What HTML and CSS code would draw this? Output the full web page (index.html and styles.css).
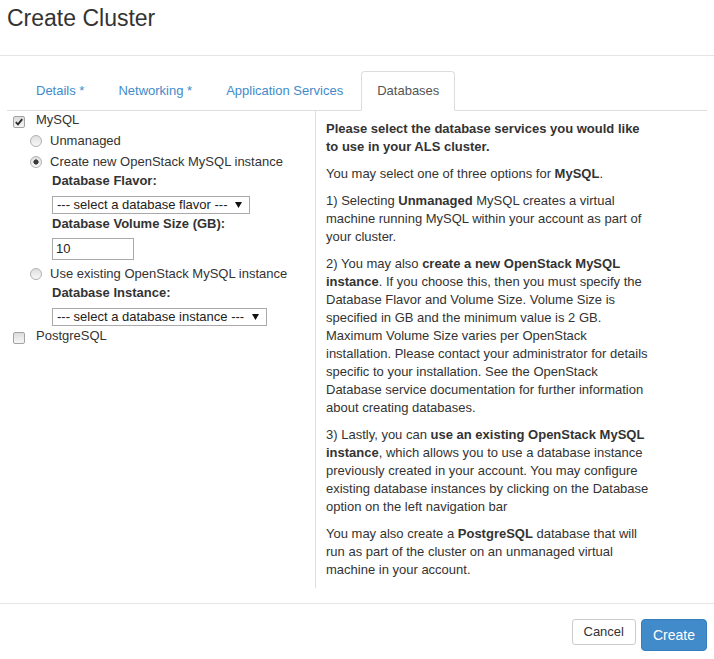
FILE: index.html
```html
<!DOCTYPE html>
<html lang="en">
<head>
<meta charset="utf-8">
<title>Create Cluster</title>
<link rel="stylesheet" href="styles.css">
</head>
<body>
<div class="modal">
  <div class="modal-header">
    <h3 class="modal-title">Create Cluster</h3>
  </div>
  <div class="modal-body">
    <ul class="nav-tabs">
      <li><a>Details *</a></li>
      <li><a>Networking *</a></li>
      <li><a>Application Services</a></li>
      <li class="active"><a>Databases</a></li>
    </ul>
    <div class="tab-content">
      <div class="col-left">
        <div class="row-check row-mysql">
          <span class="checkbox"><svg width="10" height="10" viewBox="0 0 10 10"><path d="M1.8 5.2 L4 7.4 L8.2 2.2" fill="none" stroke="#2b2b2b" stroke-width="1.9"/></svg></span>
          <span>MySQL</span>
        </div>
        <div class="row-radio first">
          <span class="radio"></span><span>Unmanaged</span>
        </div>
        <div class="row-radio">
          <span class="radio checked"></span><span>Create new OpenStack MySQL instance</span>
        </div>
        <div class="sub-label">Database Flavor:</div>
        <div class="select select-flavor"><span>--- select a database flavor ---</span><svg width="7" height="6" viewBox="0 0 7 6"><polygon points="0,0 7,0 3.5,6" fill="#111"/></svg></div>
        <div class="sub-label">Database Volume Size (GB):</div>
        <div class="text-input">10</div>
        <div class="row-radio existing">
          <span class="radio"></span><span>Use existing OpenStack MySQL instance</span>
        </div>
        <div class="sub-label">Database Instance:</div>
        <div class="select select-instance"><span>--- select a database instance ---</span><svg width="7" height="6" viewBox="0 0 7 6"><polygon points="0,0 7,0 3.5,6" fill="#111"/></svg></div>
        <div class="row-check row-pg">
          <span class="checkbox"></span>
          <span>PostgreSQL</span>
        </div>
      </div>
      <div class="col-right">
        <p><b>Please select the database services you would like to use in your ALS cluster.</b></p>
        <p>You may select one of three options for <b>MySQL</b>.</p>
        <p>1) Selecting <b>Unmanaged</b> MySQL creates a virtual machine running MySQL within your account as part of your cluster.</p>
        <p>2) You may also <b>create a new OpenStack MySQL instance</b>. If you choose this, then you must specify the Database Flavor and Volume Size. Volume Size is specified in GB and the minimum value is 2 GB. Maximum Volume Size varies per OpenStack installation. Please contact your administrator for details specific to your installation. See the OpenStack Database service documentation for further information about creating databases.</p>
        <p>3) Lastly, you can <b>use an existing OpenStack MySQL instance</b>, which allows you to use a database instance previously created in your account. You may configure existing database instances by clicking on the Database option on the left navigation bar</p>
        <p>You may also create a <b>PostgreSQL</b> database that will run as part of the cluster on an unmanaged virtual machine in your account.</p>
      </div>
    </div>
  </div>
  <div class="modal-footer">
    <button class="btn btn-default">Cancel</button>
    <button class="btn btn-primary">Create</button>
  </div>
</div>
</body>
</html>
```
FILE: styles.css
```css
* { box-sizing: border-box; }

body {
  margin: 0;
  font-family: "Liberation Sans", Arial, sans-serif;
  font-size: 13px;
  line-height: 18px;
  color: #333;
  background: #fff;
}

.modal-header {
  padding: 5px 7px 24px;
  border-bottom: 1px solid #e5e5e5;
}

.modal-title {
  margin: 0;
  font-size: 23px;
  font-weight: normal;
  line-height: 26px;
  color: #333;
}

.modal-body {
  padding: 15px 7px;
}

.nav-tabs {
  list-style: none;
  margin: 0;
  padding: 0 0 0 13px;
  display: flex;
  border-bottom: 1px solid #ddd;
}

.nav-tabs li {
  margin: 0 2px -1px 0;
}

.nav-tabs a {
  display: block;
  padding: 10px 15px;
  border: 1px solid transparent;
  border-radius: 4px 4px 0 0;
  color: #428bca;
  line-height: 18px;
  cursor: pointer;
}

.nav-tabs .active a {
  color: #555;
  background: #fff;
  border-color: #ddd #ddd transparent;
}

.tab-content {
  display: flex;
  align-items: stretch;
}

.col-left {
  width: 309px;
  border-right: 1px solid #ddd;
  padding-left: 6px;
  display: flex;
  flex-direction: column;
  align-items: flex-start;
}

.col-right {
  width: 347px;
  padding: 9px 10px 0;
}

.col-right p {
  margin: 0 0 9px;
}

.row-check {
  display: flex;
  align-items: flex-start;
  height: 18px;
}

.row-pg {
  margin-top: 1px;
}

.checkbox {
  width: 12px;
  height: 12px;
  margin: 5px 11px 0 0;
  border: 1px solid #a3a3a3;
  border-radius: 2px;
  background: linear-gradient(#dcdcdc, #f6f6f6);
  display: flex;
  align-items: center;
  justify-content: center;
}

.row-radio {
  display: flex;
  align-items: center;
  height: 18px;
  margin-top: 3px;
  padding-left: 17px;
}

.row-radio.existing {
  margin-top: 5px;
}

.radio {
  width: 12px;
  height: 12px;
  margin-right: 8px;
  border: 1px solid #b0b0b0;
  border-radius: 50%;
  background: linear-gradient(#dedede, #f8f8f8);
}

.radio.checked {
  background:
    radial-gradient(circle at center, #3a3a3a 0 2.3px, transparent 2.9px),
    linear-gradient(#dedede, #f8f8f8);
}

.sub-label {
  margin-top: 1px;
  padding-left: 39px;
  font-weight: bold;
  height: 18px;
}

.select {
  margin: 6px 0 0 39px;
  height: 18px;
  border: 1px solid #a9a9a9;
  background: #fff;
  display: flex;
  align-items: center;
  justify-content: space-between;
  padding: 0 7px 0 4px;
  line-height: 16px;
  color: #222;
}

.select-flavor { width: 198px; }
.select-instance { width: 215px; }

.text-input {
  margin: 5px 0 0 39px;
  width: 82px;
  height: 22px;
  border: 1px solid #a9a9a9;
  padding: 1px 3px;
  line-height: 18px;
  color: #222;
}

.modal-footer {
  border-top: 1px solid #e5e5e5;
  padding: 15px 7px;
  display: flex;
  justify-content: flex-end;
  align-items: flex-start;
  gap: 5px;
}

.btn {
  font-family: "Liberation Sans", Arial, sans-serif;
  border-radius: 3px;
  border: 1px solid transparent;
  cursor: pointer;
}

.btn-default {
  font-size: 13px;
  line-height: 18px;
  padding: 3px 11px;
  background: #fff;
  border-color: #ccc;
  color: #333;
}

.btn-primary {
  font-size: 14px;
  line-height: 20px;
  padding: 5px 11px;
  background: #428bca;
  border-color: #357ebd;
  color: #fff;
  border-radius: 4px;
}
```
